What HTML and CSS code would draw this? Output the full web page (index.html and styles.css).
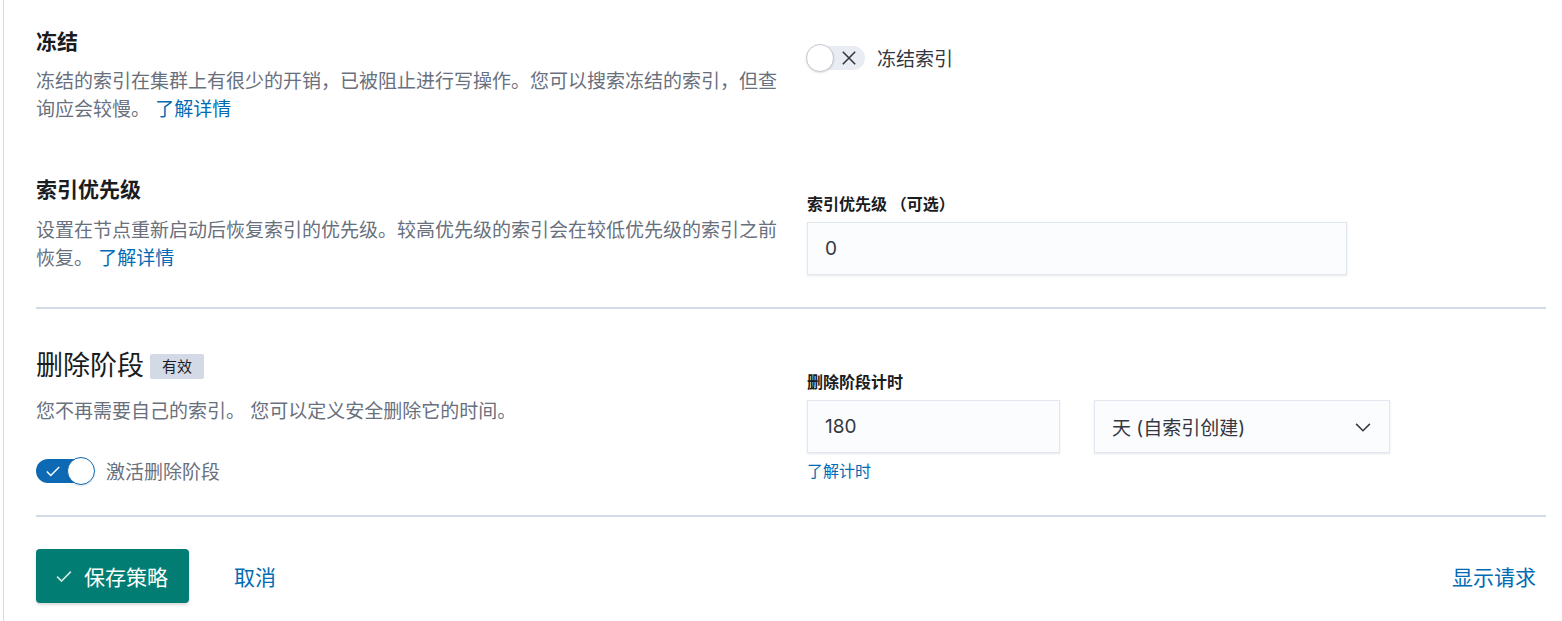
FILE: index.html
```html
<!DOCTYPE html>
<html lang="zh-CN">
<head>
    <meta charset="UTF-8">
    <title>删除阶段</title>
    <link rel="stylesheet" href="styles.css">
</head>
<body>
    <div class="page">
        <div class="row row-freeze">
            <div class="describe">
                <h3 class="title">冻结</h3>
                <p class="desc">冻结的索引在集群上有很少的开销，已被阻止进行写操作。您可以搜索冻结的索引，但查询应会较慢。&nbsp;<a href="#">了解详情</a></p>
            </div>
            <div class="fields fields-switch">
                <label class="switch">
                    <span class="track off">
                        <span class="knob"></span>
                        <svg class="icon-x" width="18" height="18" viewBox="0 0 16 16"><path d="M2.5 2.5l11 11M13.5 2.5l-11 11" stroke="#343741" stroke-width="1.4" fill="none"/></svg>
                    </span>
                    <span class="switch-label dark">冻结索引</span>
                </label>
            </div>
        </div>

        <div class="row row-priority">
            <div class="describe">
                <h3 class="title">索引优先级</h3>
                <p class="desc">设置在节点重新启动后恢复索引的优先级。较高优先级的索引会在较低优先级的索引之前恢复。&nbsp;<a href="#">了解详情</a></p>
            </div>
            <div class="fields fields-form">
                <div class="field-label">索引优先级 （可选）</div>
                <div class="input wide">0</div>
            </div>
        </div>

        <hr class="divider">

        <div class="row row-delete">
            <div class="describe">
                <h2 class="phase-title">删除阶段 <span class="badge">有效</span></h2>
                <p class="desc">您不再需要自己的索引。 您可以定义安全删除它的时间。</p>
                <label class="switch switch-on">
                    <span class="track on">
                        <svg class="icon-check" width="18" height="18" viewBox="0 0 16 16"><path d="M2.5 8.5l3.5 3.5 7.5-7.5" stroke="#fff" stroke-width="1.3" fill="none"/></svg>
                        <span class="knob"></span>
                    </span>
                    <span class="switch-label">激活删除阶段</span>
                </label>
            </div>
            <div class="fields fields-timing">
                <div class="field-label">删除阶段计时</div>
                <div class="input-row">
                    <div class="input short">180</div>
                    <div class="input select">
                        <span>天 (自索引创建)</span>
                        <svg width="20" height="20" viewBox="0 0 16 16"><path d="M2.5 5.5l5.5 5.5 5.5-5.5" stroke="#343741" stroke-width="1.2" fill="none"/></svg>
                    </div>
                </div>
                <a class="help-link" href="#">了解计时</a>
            </div>
        </div>

        <hr class="divider divider-bottom">

        <div class="actions">
            <button class="btn-save">
                <svg width="20" height="20" viewBox="0 0 16 16"><path d="M2.5 8.5l3.5 3.5 7.5-7.5" stroke="#cfe5e2" stroke-width="1.3" fill="none"/></svg>
                保存策略
            </button>
            <a class="btn-link" href="#">取消</a>
            <a class="btn-link push-right" href="#">显示请求</a>
        </div>
    </div>
</body>
</html>
```

FILE: styles.css
```css
:root {
    --text-color: #343741;
    --subdued: #69707d;
    --link: #006bb4;
    --border: #d3dae6;
    --teal: #017d73;
}

body {
    margin: 0;
    font-family: Inter, "Noto Sans CJK SC", sans-serif;
    color: var(--text-color);
    background: #fff;
}

.page {
    border-left: 1px solid var(--border);
    margin-left: 3px;
    padding: 28px 16px 0 32px;
    height: 621px;
    box-sizing: border-box;
}

.row {
    display: flex;
}

.describe {
    width: 746px;
    flex-shrink: 0;
}

.fields {
    margin-left: 25px;
}

.title {
    margin: 0;
    font-size: 21px;
    line-height: 28px;
    font-weight: 700;
    color: #1a1c21;
}

.desc {
    margin: 12px 0 0;
    font-size: 19px;
    line-height: 28px;
    color: var(--subdued);
}

.desc a {
    color: var(--link);
    text-decoration: none;
}

.row-priority {
    margin-top: 52px;
}

.row-priority .desc {
    margin-top: 13px;
}

.fields-switch {
    padding-top: 16px;
}

.switch {
    display: flex;
    align-items: center;
}

.track {
    position: relative;
    width: 58px;
    height: 24px;
    border-radius: 12px;
    display: flex;
    align-items: center;
    flex-shrink: 0;
}

.track.off {
    background: #e9ecf2;
}

.track.on {
    background: #0d69b3;
}

.knob {
    position: absolute;
    top: -2px;
    width: 26px;
    height: 26px;
    border-radius: 50%;
    background: #fff;
    border: 1px solid #c4c8d0;
    box-shadow: 0 1px 2px rgba(0, 0, 0, 0.12);
}

.track.off .knob {
    left: -1px;
}

.track.on .knob {
    right: -1px;
    border-color: #0d69b3;
}

.icon-x {
    margin-left: 33px;
}

.icon-check {
    margin-left: 8px;
}

.switch-label {
    margin-left: 12px;
    font-size: 19px;
    color: var(--subdued);
}

.switch-label.dark {
    color: var(--text-color);
}

.field-label {
    font-size: 16px;
    font-weight: 700;
    line-height: 20px;
    color: #1a1c21;
    margin-bottom: 8px;
}

.fields-form {
    padding-top: 18px;
}

.input {
    height: 53px;
    box-sizing: border-box;
    background: #fbfcfd;
    border: 1px solid #e3e6ee;
    box-shadow: 0 1px 2px rgba(152, 162, 179, 0.25);
    padding: 0 17px;
    display: flex;
    align-items: center;
    font-size: 19px;
    color: var(--text-color);
}

.wide {
    width: 540px;
}

.divider {
    border: 0;
    border-top: 2px solid var(--border);
    margin: 32px 0 0;
}

.row-delete {
    margin-top: 40px;
}

.phase-title {
    margin: 0;
    font-size: 27px;
    line-height: 34px;
    font-weight: 400;
    color: #1a1c21;
    display: flex;
    align-items: center;
}

.badge {
    margin-left: 6px;
    background: var(--border);
    font-size: 15px;
    line-height: 25px;
    padding: 0 12px;
    border-radius: 2px;
    color: #1a1c21;
}

.row-delete .desc {
    margin-top: 15px;
}

.switch-on {
    margin-top: 31px;
}

.fields-timing {
    padding-top: 23px;
}

.input-row {
    display: flex;
    gap: 34px;
}

.short {
    width: 253px;
}

.select {
    width: 296px;
    justify-content: space-between;
    padding-right: 16px;
}

.help-link {
    display: block;
    margin-top: 8px;
    font-size: 16px;
    line-height: 20px;
    color: var(--link);
    text-decoration: none;
}

.divider-bottom {
    margin-top: 31px;
}

.actions {
    display: flex;
    align-items: center;
    margin-top: 32px;
}

.btn-save {
    display: flex;
    align-items: center;
    gap: 10px;
    height: 54px;
    padding: 0 21px 0 18px;
    background: var(--teal);
    color: #fff;
    border: none;
    border-radius: 4px;
    box-shadow: 0 2px 3px rgba(0, 0, 0, 0.15);
    font-family: inherit;
    font-size: 21px;
}

.btn-link {
    margin-left: 45px;
    font-size: 21px;
    color: var(--link);
    text-decoration: none;
}

.push-right {
    margin-left: auto;
    margin-right: 10px;
}
```
